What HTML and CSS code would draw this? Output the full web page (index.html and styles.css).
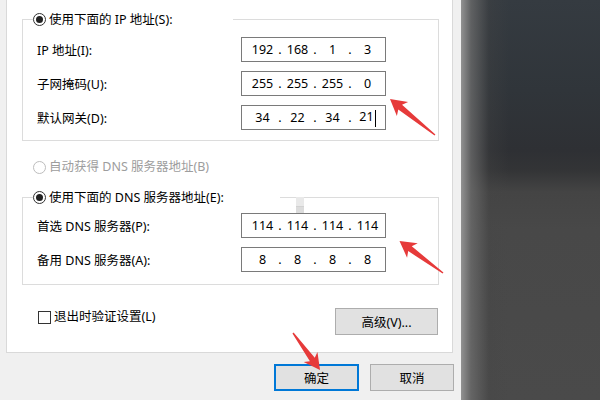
FILE: index.html
```html
<!DOCTYPE html>
<html lang="zh-CN">
<head>
<meta charset="utf-8">
<title>IP 设置</title>
<link rel="stylesheet" href="styles.css">
</head>
<body>
<div class="screen">
  <div class="dialog">
    <div class="panel">
      <fieldset class="group group-ip">
        <legend class="legend legend-ip"><span class="radio checked"></span><span class="legend-text">使用下面的 IP 地址(S):</span></legend>
        <div class="rows">
          <div class="row"><span class="label">IP 地址(I):</span>
            <div class="ip"><span class="seg">192</span><span class="dot">.</span><span class="seg">168</span><span class="dot">.</span><span class="seg">1</span><span class="dot">.</span><span class="seg">3</span></div></div>
          <div class="row"><span class="label">子网掩码(U):</span>
            <div class="ip"><span class="seg">255</span><span class="dot">.</span><span class="seg">255</span><span class="dot">.</span><span class="seg">255</span><span class="dot">.</span><span class="seg">0</span></div></div>
          <div class="row"><span class="label">默认网关(D):</span>
            <div class="ip"><span class="seg">34</span><span class="dot">.</span><span class="seg">22</span><span class="dot">.</span><span class="seg">34</span><span class="dot">.</span><span class="seg">21<span class="caret"></span></span></div></div>
        </div>
      </fieldset>

      <div class="option disabled"><span class="radio"></span><span>自动获得 DNS 服务器地址(B)</span></div>

      <fieldset class="group group-dns">
        <legend class="legend legend-dns"><span class="radio checked"></span><span class="legend-text">使用下面的 DNS 服务器地址(E):</span></legend>
        <div class="rows">
          <div class="row"><span class="label">首选 DNS 服务器(P):</span>
            <div class="ip"><span class="seg">114</span><span class="dot">.</span><span class="seg">114</span><span class="dot">.</span><span class="seg">114</span><span class="dot">.</span><span class="seg">114</span></div></div>
          <div class="row"><span class="label">备用 DNS 服务器(A):</span>
            <div class="ip"><span class="seg">8</span><span class="dot">.</span><span class="seg">8</span><span class="dot">.</span><span class="seg">8</span><span class="dot">.</span><span class="seg">8</span></div></div>
        </div>
      </fieldset>

      <div class="footer-row">
        <div class="check"><span class="box"></span><span>退出时验证设置(L)</span></div>
        <button class="btn btn-adv">高级(V)...</button>
      </div>
    </div>
    <div class="actions">
      <button class="btn btn-ok">确定</button>
      <button class="btn btn-cancel">取消</button>
    </div>
  </div>
  <div class="backdrop"></div>

  <div class="glitch"></div>
  <svg class="arrows" width="600" height="400" viewBox="0 0 600 400">
    <polygon transform="translate(390 99) rotate(38.66)" points="0,0 16,-9 13,-3 57.6,-0.7 57.6,0.7 13,3 16,9"/>
    <polygon transform="translate(399.5 241) rotate(36.3)" points="0,0 16,-9 13,-3 54,-0.7 54,0.7 13,3 16,9"/>
    <polygon transform="translate(320 370) rotate(233.9)" points="0,0 16,-8.5 13,-3 45.8,-0.7 45.8,0.7 13,3 16,8.5"/>
  </svg>
</div>
</body>
</html>
```

FILE: styles.css
```css
html, body {
  margin: 0;
  padding: 0;
}

body {
  width: 600px;
  height: 400px;
  overflow: hidden;
  font-family: "Noto Sans", "Noto Sans CJK SC", sans-serif;
  font-size: 12.5px;
  color: #000;
}

.screen {
  position: relative;
  display: flex;
  width: 600px;
  height: 400px;
}

.dialog {
  width: 461px;
  flex: none;
  background: #f0f0f0;
  display: flex;
  flex-direction: column;
}

.panel {
  margin-left: 6px;
  width: 447px;
  height: 353px;
  box-sizing: border-box;
  background: #fff;
  border: 1px solid #d9d9d9;
  border-top: 0;
  padding: 11px 13px 0 15px;
}

.group {
  margin: 0;
  min-width: 0;
  border: 1px solid #dcdcdc;
  padding: 10px 0 10px 14px;
}

.group-dns {
  margin-top: 14px;
  padding-top: 8px;
  padding-bottom: 12px;
}

.legend {
  padding: 0;
  margin-left: -4px;
  height: 16px;
  line-height: 16px;
  white-space: nowrap;
}

.legend-ip { width: 200px; }
.legend-dns { width: 247px; }

.legend-text {
  display: inline-block;
  vertical-align: middle;
  margin-left: 3px;
}

.radio {
  display: inline-block;
  position: relative;
  width: 13px;
  height: 13px;
  box-sizing: border-box;
  border: 1px solid #333;
  border-radius: 50%;
  background: #fff;
  vertical-align: middle;
}

.radio.checked::after {
  content: "";
  position: absolute;
  left: 2px;
  top: 2px;
  width: 7px;
  height: 7px;
  border-radius: 50%;
  background: #222;
}

.rows {
  display: flex;
  flex-direction: column;
  gap: 9px;
}

.row {
  display: flex;
  align-items: center;
  height: 25px;
}

.label {
  width: 204px;
  flex: none;
}

.ip {
  width: 145px;
  height: 25px;
  box-sizing: border-box;
  border: 1px solid #7a7a7a;
  background: #fff;
  display: flex;
  align-items: center;
  padding-left: 5px;
}

.seg {
  width: 31px;
  text-align: center;
  white-space: nowrap;
}

.dot {
  width: 4px;
  text-align: center;
}

.caret {
  display: inline-block;
  width: 1px;
  height: 17px;
  background: #000;
  vertical-align: middle;
  margin-left: 1px;
}

.option {
  margin: 18px 0 0 11px;
  height: 16px;
  line-height: 16px;
  display: flex;
  align-items: center;
  gap: 3px;
  color: #9d9d9d;
}

.option .radio {
  border-color: #bdbdbd;
}

.footer-row {
  margin-top: 23px;
  padding-left: 16px;
  margin-right: 1px;
  display: flex;
  justify-content: space-between;
  align-items: flex-start;
}

.check {
  margin-top: 1px;
  height: 16px;
  line-height: 16px;
  display: flex;
  align-items: center;
  gap: 3px;
}

.box {
  width: 13px;
  height: 13px;
  box-sizing: border-box;
  border: 1px solid #333;
  background: #fff;
}

.btn {
  font: inherit;
  color: #000;
  margin: 0;
  padding: 0;
  height: 27px;
  box-sizing: border-box;
  background: #e1e1e1;
  border: 1px solid #adadad;
}

.btn-adv { width: 103px; }

.actions {
  display: flex;
  justify-content: flex-end;
  gap: 11px;
  padding: 11px 7px 0 0;
}

.btn-ok {
  width: 85px;
  border: 2px solid #0078d7;
}

.btn-cancel { width: 84px; }

.backdrop {
  flex: 1;
  background:
    linear-gradient(to right, #929292 0, rgba(110,110,110,0.75) 10px, rgba(70,70,70,0.3) 28px, rgba(60,60,60,0) 48px),
    linear-gradient(to bottom, #353b41 0, #30353a 90px, #2e3034 150px, #333436 170px, #444 192px, #484848 230px, #4a4a4a 100%);
}

.glitch {
  position: absolute;
  left: 296px;
  top: 197px;
  width: 8px;
  height: 16px;
  background: linear-gradient(#e9e9e9 0, #e9e9e9 55%, #d2d2d2 55%, #d2d2d2 65%, #dcdcdc 65%);
}

.arrows {
  position: absolute;
  left: 0;
  top: 0;
  pointer-events: none;
}

.arrows polygon {
  fill: #e63a3a;
}
```
